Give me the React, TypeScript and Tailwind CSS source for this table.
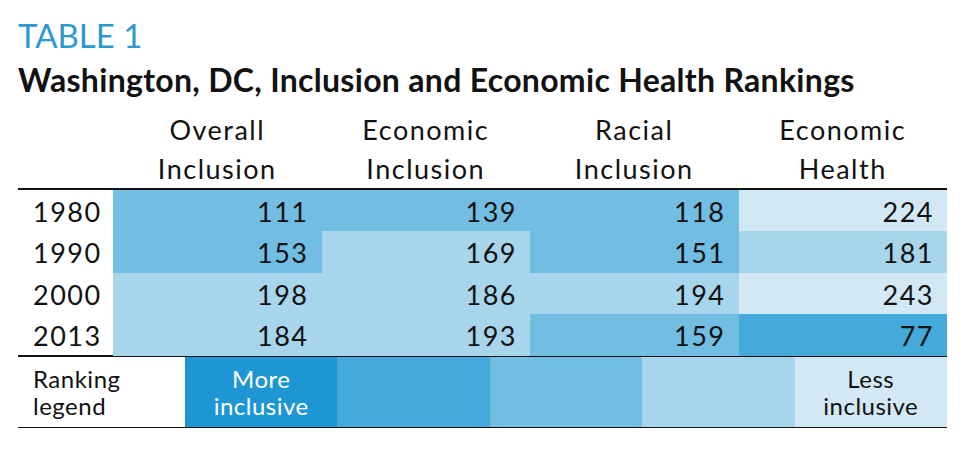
const shade = {
  1: "bg-[#1e96d4]",
  2: "bg-[#45a9dc]",
  3: "bg-[#72bde2]",
  4: "bg-[#a7d5ec]",
  5: "bg-[#d2e8f4]",
}

type Level = keyof typeof shade

const headers = [
  ["Overall", "Inclusion"],
  ["Economic", "Inclusion"],
  ["Racial", "Inclusion"],
  ["Economic", "Health"],
]

const rows: { year: string; cells: [number, Level][] }[] = [
  { year: "1980", cells: [[111, 3], [139, 3], [118, 3], [224, 5]] },
  { year: "1990", cells: [[153, 3], [169, 4], [151, 3], [181, 4]] },
  { year: "2000", cells: [[198, 4], [186, 4], [194, 4], [243, 5]] },
  { year: "2013", cells: [[184, 4], [193, 4], [159, 3], [77, 2]] },
]

const App = () => {
  return (
    <div className="h-[474px] w-[974px] overflow-hidden bg-white font-['Lato',sans-serif] text-[#121212]">
      <div className="ml-[18px] w-[929px] pt-[19px]">
        <h1 className="text-[33px] leading-[33px] text-[#2b9ad1]">TABLE 1</h1>
        <h2 className="mt-[12px] text-[32px] font-bold leading-[32px] tracking-[0.3px]">
          Washington, DC, Inclusion and Economic Health Rankings
        </h2>

        <div className="mt-[14px] grid grid-cols-[95px_1fr_1fr_1fr_1fr] text-[27px] leading-[39px] tracking-[1.5px]">
          <div />
          {headers.map((h, i) => (
            <div key={i} className="text-center">
              {h[0]}
              <br />
              {h[1]}
            </div>
          ))}
        </div>

        <div className="border-t-2 border-[#121212]">
          {rows.map((r) => (
            <div
              key={r.year}
              className="grid h-[41.25px] grid-cols-[95px_1fr_1fr_1fr_1fr] text-[27px] leading-[41px] tracking-[1.5px]"
            >
              <div className="pl-[15px] pt-[1px]">{r.year}</div>
              {r.cells.map(([v, lvl], i) => (
                <div key={i} className={`${shade[lvl]} pr-[13px] pt-[1px] text-right`}>
                  {v}
                </div>
              ))}
            </div>
          ))}
        </div>

        <div className="grid h-[73px] grid-cols-[167px_1fr_1fr_1fr_1fr_1fr] border-y-2 border-[#121212] border-b-[1px] text-[24px] leading-[27px] tracking-[0.5px]">
          <div className="flex flex-col justify-center pl-[15px]">
            <span>Ranking</span>
            <span>legend</span>
          </div>
          <div className={`${shade[1]} flex flex-col items-center justify-center text-white`}>
            <span>More</span>
            <span>inclusive</span>
          </div>
          <div className={shade[2]} />
          <div className={shade[3]} />
          <div className={shade[4]} />
          <div className={`${shade[5]} flex flex-col items-center justify-center`}>
            <span>Less</span>
            <span>inclusive</span>
          </div>
        </div>
      </div>
    </div>
  )
}

export default App
